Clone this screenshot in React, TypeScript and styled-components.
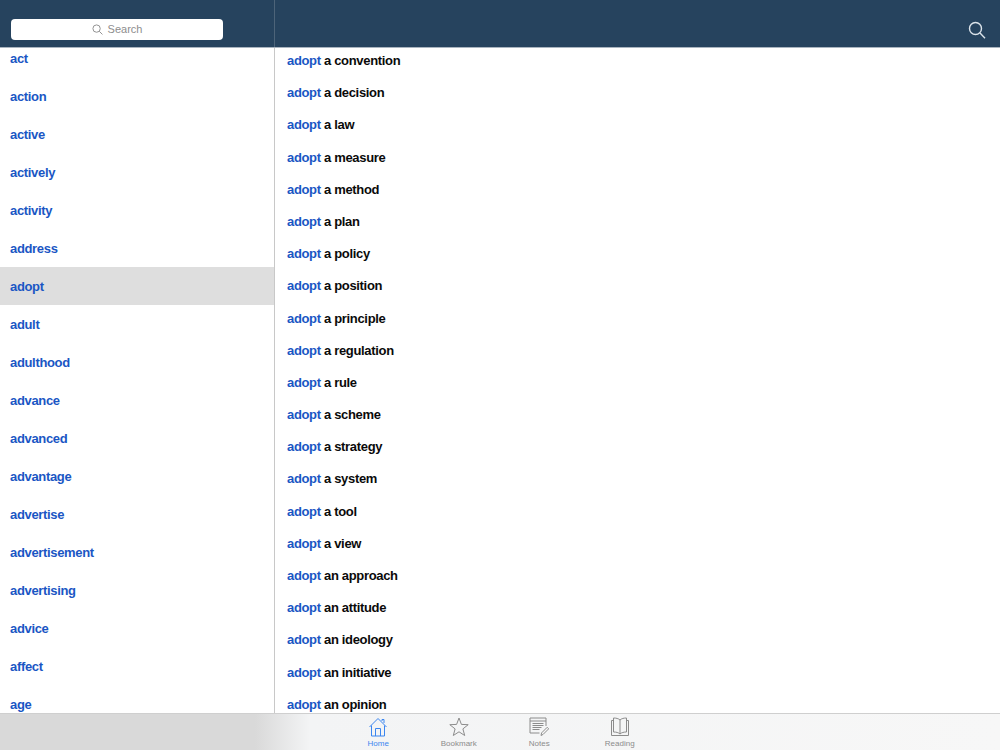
import React from 'react';
import styled, { createGlobalStyle } from 'styled-components';

const GlobalStyle = createGlobalStyle`
  html, body {
    margin: 0;
    padding: 0;
    background: #fff;
    font-family: "Liberation Sans", Arial, sans-serif;
  }
`;

const words = [
  'act', 'action', 'active', 'actively', 'activity', 'address', 'adopt', 'adult', 'adulthood', 'advance',
  'advanced', 'advantage', 'advertise', 'advertisement', 'advertising', 'advice', 'affect', 'age',
];

const phrases = [
  'a convention', 'a decision', 'a law', 'a measure', 'a method', 'a plan', 'a policy', 'a position',
  'a principle', 'a regulation', 'a rule', 'a scheme', 'a strategy', 'a system', 'a tool', 'a view',
  'an approach', 'an attitude', 'an ideology', 'an initiative', 'an opinion',
];

const HomeIcon = () => (
  <svg width="20" height="20" viewBox="0 0 20 20" fill="none" stroke="currentColor" strokeWidth="1">
    <path d="M1.500 10 10 1.500l8.500 8.500M3.500 8.500V19h13V8.500M7.500 19v-7.500h5V19M14 4V2.500h2V6" />
  </svg>
);

const StarIcon = () => (
  <svg width="20" height="20" viewBox="0 0 20 20" fill="none" stroke="currentColor" strokeWidth="1">
    <path d="M10 1 12.400 7.400 19.200 7.700 13.900 11.900 15.700 18.500 10 14.800 4.300 18.500 6.100 11.900.8 7.700 7.600 7.400Z" />
  </svg>
);

const NotesIcon = () => (
  <svg width="20" height="20" viewBox="0 0 20 20" fill="none" stroke="currentColor" strokeWidth="1">
    <path d="M17 9V1H1v15h9.500M1 4h16" />
    <path d="M3.500 6.500h11M3.500 8.500h11M3.500 10.500h9M3.500 12.500h7" />
    <path d="m12 18.500.6-2.600 5.600-5.600 1.500 1.500-5.600 5.600Z" fill="#f7f7f7" />
  </svg>
);

const BookIcon = () => (
  <svg width="20" height="20" viewBox="0 0 20 20" fill="none" stroke="currentColor" strokeWidth="1">
    <path d="M10 3C8.500 1.500 6 1 3.500 1v14c2.500 0 5 .5 6.500 2 1.500-1.500 4-2 6.500-2V1C14 1 11.500 1.500 10 3V17" />
    <path d="M3.500 3.500H1.500V18.500H18.500V3.500H16.500" />
  </svg>
);

const tabs = [
  { label: 'Home', icon: <HomeIcon />, active: true },
  { label: 'Bookmark', icon: <StarIcon />, active: false },
  { label: 'Notes', icon: <NotesIcon />, active: false },
  { label: 'Reading', icon: <BookIcon />, active: false },
];

const App: React.FC = () => {
  return (
    <Page>
      <GlobalStyle />
      <Header>
        <HeaderLeft>
          <SearchField>
            <svg width="11" height="11" viewBox="0 0 12 12" fill="none" stroke="#8a8a8a" strokeWidth="1">
              <circle cx="5" cy="5" r="4" />
              <path d="m8 8 3.400 3.400" />
            </svg>
            <span>Search</span>
          </SearchField>
        </HeaderLeft>
        <HeaderRight>
          <svg width="18" height="18" viewBox="0 0 18 18" fill="none" stroke="#dbe3ea" strokeWidth="1.400">
            <circle cx="7.500" cy="7.500" r="6" />
            <path d="m12 12 5 5.200" />
          </svg>
        </HeaderRight>
      </Header>
      <Body>
        <WordList>
          <WordScroll>
            {words.map((w) => (
              <WordRow key={w} $selected={w === 'adopt'}>
                {w}
              </WordRow>
            ))}
          </WordScroll>
        </WordList>
        <PhraseList>
          {phrases.map((p) => (
            <PhraseRow key={p}>
              <Keyword>adopt</Keyword> {p}
            </PhraseRow>
          ))}
        </PhraseList>
      </Body>
      <TabBar>
        {tabs.map((t) => (
          <Tab key={t.label} $active={t.active}>
            {t.icon}
            <TabLabel>{t.label}</TabLabel>
          </Tab>
        ))}
      </TabBar>
    </Page>
  );
};
export default App;

const Page = styled.div`
  width: 1000px;
  height: 750px;
  display: flex;
  flex-direction: column;
  overflow: hidden;
`;
const Header = styled.div`
  height: 47px;
  flex: none;
  display: flex;
  background: #26435e;
  border-bottom: 1px solid #a9b4bf;
`;
const HeaderLeft = styled.div`
  width: 275px;
  flex: none;
  box-sizing: border-box;
  padding: 19px 51px 0 11px;
  border-right: 1px solid #4d6479;
`;
const SearchField = styled.div`
  height: 21px;
  box-sizing: border-box;
  padding-bottom: 1px;
  background: #fff;
  border-radius: 4px;
  display: flex;
  align-items: center;
  justify-content: center;
  gap: 5px;
  font-size: 11px;
  color: #8e8e8e;
`;
const HeaderRight = styled.div`
  flex: 1;
  display: flex;
  justify-content: flex-end;
  align-items: flex-start;
  padding: 21px 14px 0 0;
`;
const Body = styled.div`
  flex: 1;
  min-height: 0;
  display: flex;
`;
const WordList = styled.div`
  width: 275px;
  flex: none;
  box-sizing: border-box;
  border-right: 1px solid #c8c8c8;
  overflow: hidden;
`;
const WordScroll = styled.div`
  margin-top: -9px;
`;
const WordRow = styled.div<{ $selected?: boolean }>`
  height: 38px;
  line-height: 39px;
  padding-left: 10px;
  font-size: 13px;
  font-weight: 700;
  letter-spacing: -0.33px;
  color: #1a56c4;
  background: ${(p) => (p.$selected ? '#dedede' : 'transparent')};
`;
const PhraseList = styled.div`
  flex: 1;
  overflow: hidden;
`;
const PhraseRow = styled.div`
  height: 32.2px;
  line-height: 25px;
  padding-left: 12px;
  font-size: 13px;
  font-weight: 700;
  letter-spacing: -0.33px;
  color: #0a0a0a;
`;
const Keyword = styled.span`
  color: #1a56c4;
`;
const TabBar = styled.div`
  height: 37px;
  flex: none;
  display: flex;
  box-sizing: border-box;
  border-top: 1px solid #cfcfcf;
  background: linear-gradient(90deg, #d9d9d9 0, #d9d9d9 255px, #f3f4f5 310px, #f7f7f7 100%);
  padding-left: 338px;
`;
const Tab = styled.div<{ $active?: boolean }>`
  width: 80.5px;
  display: flex;
  flex-direction: column;
  align-items: center;
  padding-top: 3px;
  box-sizing: border-box;
  color: ${(p) => (p.$active ? '#3b86f0' : '#8c8c8c')};
`;
const TabLabel = styled.div`
  font-size: 8px;
  margin-top: 2px;
`;
